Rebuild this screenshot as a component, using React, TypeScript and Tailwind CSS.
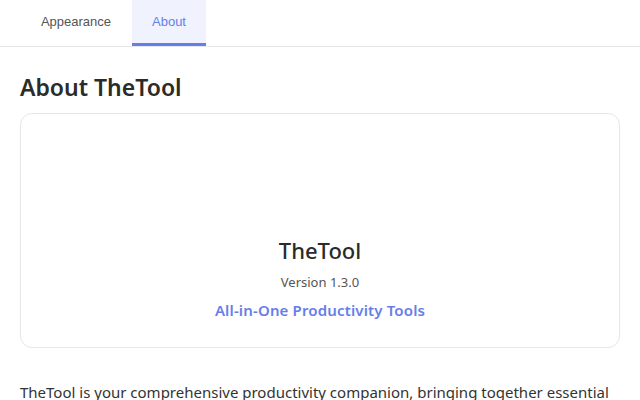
import React from "react";

export default function App() {
  return (
    <div className="w-[640px] h-[400px] overflow-hidden bg-white" style={{ fontFamily: '"Noto Sans", sans-serif' }}>
      <div className="flex border-b border-[#e5e7eb] pl-5" style={{ fontFamily: '"Liberation Sans", Arial, sans-serif' }}>
        <button className="w-[112px] pt-[14px] pb-[14px] text-[13px] leading-[15px] text-[#555] border-b-[3px] border-transparent">
          Appearance
        </button>
        <button className="w-[74px] pt-[14px] pb-[14px] text-[13px] leading-[15px] text-[#667eea] bg-[#f0f3fd] border-b-[3px] border-[#667eea]">
          About
        </button>
      </div>
      <div className="px-5 pt-[20px]">
        <h1 className="text-[23px] leading-[40px] font-semibold text-[#2b2b2b] mb-[6px]">About TheTool</h1>
        <div className="border border-[#e5e7eb] rounded-[12px] h-[235px] flex flex-col items-center justify-end pb-[26px]">
          <div className="text-[22px] leading-[30px] font-medium text-[#2b2b2b]">TheTool</div>
          <div className="mt-[8px] text-[13px] leading-[18px] text-[#555]">Version 1.3.0</div>
          <div className="mt-[8px] text-[15px] leading-[22px] font-semibold text-[#667eea] tracking-[0.15px]">All-in-One Productivity Tools</div>
        </div>
        <p className="mt-[32px] text-[15px] leading-[24px] text-[#333]">
          TheTool is your comprehensive productivity companion, bringing together essential tools in one place.
        </p>
      </div>
    </div>
  );
}
